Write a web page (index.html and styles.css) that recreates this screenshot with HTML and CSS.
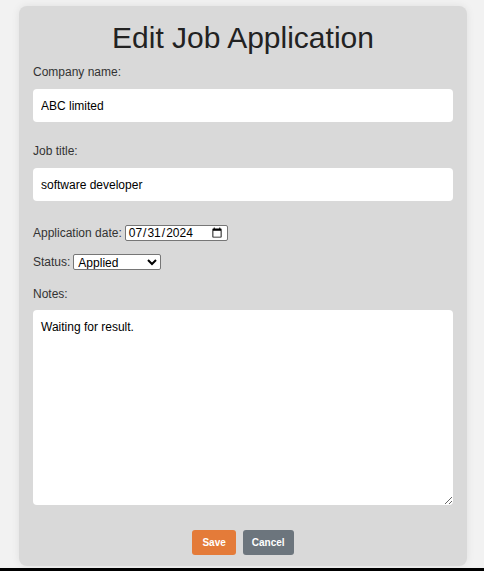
FILE: index.html
```html
<!DOCTYPE html>
<html lang="en">
<head>
<meta charset="utf-8">
<title>Edit Job Application</title>
<link rel="stylesheet" href="styles.css">
</head>
<body>
<div class="card">
  <h1 class="title">Edit Job Application</h1>
  <form class="form">
    <label class="label" for="company">Company name:</label>
    <input class="text-input" id="company" type="text" value="ABC limited">
    <label class="label label-gap" for="job">Job title:</label>
    <input class="text-input" id="job" type="text" value="software developer">
    <div class="inline-row date-row">
      <label class="label-inline" for="date">Application date:</label>
      <input class="date-input" id="date" type="date" value="2024-07-31">
    </div>
    <div class="inline-row status-row">
      <label class="label-inline" for="status">Status:</label>
      <select class="status-select" id="status">
        <option>Applied</option>
        <option>Interview</option>
        <option>Offer</option>
        <option>Rejected</option>
      </select>
    </div>
    <label class="label notes-label" for="notes">Notes:</label>
    <textarea class="notes" id="notes">Waiting for result.</textarea>
    <div class="actions">
      <button type="button" class="btn btn-save">Save</button>
      <button type="button" class="btn btn-cancel">Cancel</button>
    </div>
  </form>
</div>
<div class="bottom-edge"></div>
</body>
</html>
```

FILE: styles.css
```css
html, body {
  margin: 0;
  padding: 0;
}
body {
  background: #f2f2f2;
  font-family: "Liberation Sans", Arial, sans-serif;
  color: #333;
  height: 571px;
  overflow: hidden;
}
.card {
  margin: 6px 0 0 19px;
  width: 448px;
  box-sizing: border-box;
  padding: 15px 14px 11px;
  background: #d9d9d9;
  border-radius: 8px;
  box-shadow: 0 0 8px rgba(0, 0, 0, 0.08);
}
.title {
  margin: 0 0 10px;
  font-size: 30px;
  line-height: 34px;
  font-weight: normal;
  text-align: center;
  color: #222;
}
.form {
  display: flex;
  flex-direction: column;
}
.label {
  display: block;
  font-size: 12px;
  line-height: 14px;
}
.label-gap {
  margin-top: 22px;
}
.text-input {
  margin-top: 10px;
  height: 33px;
  box-sizing: border-box;
  padding: 0 8px;
  border: none;
  border-radius: 4px;
  background: #fff;
  font-family: "Liberation Sans", Arial, sans-serif;
  font-size: 12px;
  color: #000;
  outline: none;
}
.inline-row {
  display: flex;
  align-items: center;
  gap: 3px;
  font-size: 12px;
}
.date-row {
  margin-top: 24px;
}
.status-row {
  margin-top: 13px;
}
.label-inline {
  font-size: 12px;
  line-height: 14px;
}
.date-input {
  width: 103px;
  height: 16px;
  box-sizing: border-box;
  padding: 0 2px;
  border: 1px solid #767676;
  border-radius: 2px;
  font-family: "Liberation Sans", Arial, sans-serif;
  font-size: 12px;
  color: #000;
  background: #fff;
}
.status-select {
  width: 88px;
  height: 16px;
  box-sizing: border-box;
  padding: 0;
  border: 1px solid #767676;
  border-radius: 2px;
  font-family: "Liberation Sans", Arial, sans-serif;
  font-size: 12px;
  color: #000;
  background: #fff;
}
.notes-label {
  margin-top: 17px;
}
.notes {
  margin-top: 9px;
  height: 195px;
  box-sizing: border-box;
  padding: 10px 8px;
  border: none;
  border-radius: 4px;
  background: #fff;
  font-family: "Liberation Sans", Arial, sans-serif;
  font-size: 12px;
  line-height: 14px;
  color: #000;
  outline: none;
}
.actions {
  margin-top: 25px;
  display: flex;
  justify-content: center;
  gap: 7px;
}
.btn {
  height: 25px;
  padding: 0 10px;
  border: none;
  border-radius: 3px;
  color: #fff;
  font-family: "Liberation Sans", Arial, sans-serif;
  font-size: 10px;
  font-weight: bold;
}
.btn-save {
  background: #e47b39;
}
.btn-cancel {
  background: #6c757d;
  padding: 0 9px;
}
.bottom-edge {
  position: fixed;
  left: 0;
  right: 0;
  bottom: 0;
  height: 3px;
  background: #000;
}
```
